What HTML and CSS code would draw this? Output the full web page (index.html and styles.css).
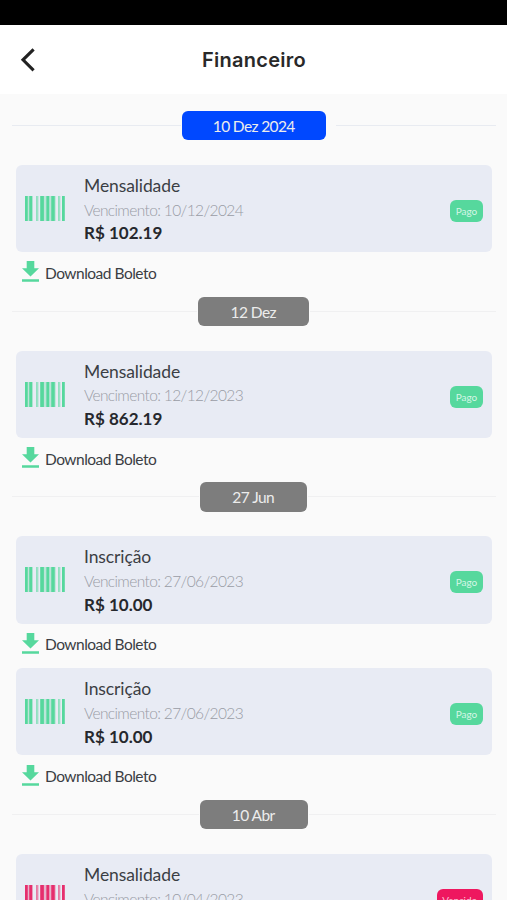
FILE: index.html
```html
<!DOCTYPE html>
<html lang="pt-BR">

<head>
    <meta charset="UTF-8">
    <meta name="viewport" content="width=device-width, initial-scale=1.0">
    <title>Financeiro</title>
    <link rel="stylesheet" href="styles.css">
</head>

<body>
    <!-- ícones usados na lista -->
    <svg width="0" height="0" class="sprite">
        <symbol id="barcode" viewBox="0 0 40 25">
            <path d="M0 0h2.8v25H0zM4.2 0h3.2v25H4.2zM15.2 0h3.7v25h-3.7zM21.3 0h3v25h-3zM26.2 0h3.6v25h-3.6zM37 0h2.8v25H37z"/>
            <path opacity=".6" d="M11 0h1.8v25H11zM33 0h1.8v25H33z"/>
            <path opacity=".3" d="M2.8 0h1.4v25H2.8zM12.8 0h.9v25h-.9zM18.9 0h2.4v25h-2.4zM24.3 0h1.9v25h-1.9zM29.8 0h1v25h-1zM34.8 0h.8v25h-.8z"/>
        </symbol>
        <symbol id="download" viewBox="0 0 17 21">
            <path d="M4.7 0h7.6v7.2H17L8.5 15.4 0 7.2h4.7zM0 18.3h17v2.4H0z"/>
        </symbol>
    </svg>

    <div class="status-bar"></div>
    <header class="header">
        <svg class="back" viewBox="0 0 16 26">
            <path d="M13.6 2.3L3 12.8l10.6 10.5"/>
        </svg>
        <h1>Financeiro</h1>
    </header>

    <main class="list">
        <div class="date current"><span>10 Dez 2024</span></div>
        <div class="card">
            <svg class="barcode"><use href="#barcode"/></svg>
            <div class="info">
                <p class="name">Mensalidade</p>
                <p class="due">Vencimento: 10/12/2024</p>
                <p class="value">R$ 102.19</p>
            </div>
            <span class="badge">Pago</span>
        </div>
        <a class="download"><svg><use href="#download"/></svg>Download Boleto</a>

        <div class="date"><span>12 Dez</span></div>
        <div class="card">
            <svg class="barcode"><use href="#barcode"/></svg>
            <div class="info">
                <p class="name">Mensalidade</p>
                <p class="due">Vencimento: 12/12/2023</p>
                <p class="value">R$ 862.19</p>
            </div>
            <span class="badge">Pago</span>
        </div>
        <a class="download"><svg><use href="#download"/></svg>Download Boleto</a>

        <div class="date"><span>27 Jun</span></div>
        <div class="card">
            <svg class="barcode"><use href="#barcode"/></svg>
            <div class="info">
                <p class="name">Inscrição</p>
                <p class="due">Vencimento: 27/06/2023</p>
                <p class="value">R$ 10.00</p>
            </div>
            <span class="badge">Pago</span>
        </div>
        <a class="download"><svg><use href="#download"/></svg>Download Boleto</a>
        <div class="card">
            <svg class="barcode"><use href="#barcode"/></svg>
            <div class="info">
                <p class="name">Inscrição</p>
                <p class="due">Vencimento: 27/06/2023</p>
                <p class="value">R$ 10.00</p>
            </div>
            <span class="badge">Pago</span>
        </div>
        <a class="download"><svg><use href="#download"/></svg>Download Boleto</a>

        <div class="date"><span>10 Abr</span></div>
        <div class="card late">
            <svg class="barcode"><use href="#barcode"/></svg>
            <div class="info">
                <p class="name">Mensalidade</p>
                <p class="due">Vencimento: 10/04/2023</p>
            </div>
            <span class="badge">Vencido</span>
        </div>
    </main>
</body>
</html>
```
FILE: styles.css
```css
* {
    box-sizing: border-box;
}

body {
    display: flex;
    flex-direction: column;
    height: 100vh;
    margin: 0;
    overflow: hidden;
    background-color: #fafafa;
    color: #3b3e44;
    font-family: Lato, "Liberation Sans", sans-serif;
}

.sprite {
    position: absolute;
}

.status-bar {
    flex: none;
    height: 25px;
    background-color: #000;
}

/* cabeçalho */
.header {
    display: grid;
    grid-template-columns: 40px 1fr 40px;
    align-items: center;
    flex: none;
    height: 69px;
    background-color: #fff;
}

.back {
    width: 16px;
    height: 26px;
    margin-left: 20px;
    fill: none;
    stroke: #222;
    stroke-width: 3.1;
}

h1 {
    margin: 0;
    padding-left: 1px;
    text-align: center;
    font-family: Inter, sans-serif;
    font-size: 20px;
    font-weight: 600;
    letter-spacing: 0.25px;
    color: #292929;
}

/* lista de boletos */
.list {
    flex: 1;
    min-height: 0;
    overflow: hidden;
    padding: 17px 11px 0 11.5px;
}

.date {
    display: flex;
    align-items: center;
    height: 29.3px;
    margin-bottom: 24.6px;
}

.date::before,
.date::after {
    content: "";
    flex: 1;
    height: 1px;
    background-color: #f0f0f1;
}

.date::before {
    margin-right: 1px;
}

.date::after {
    margin-left: 1px;
}

.date span {
    height: 29.3px;
    padding: 0 33px 0 32px;
    border-radius: 6px;
    background-color: #7d7d7d;
    color: #ececec;
    font-size: 15.5px;
    line-height: 31px;
    letter-spacing: -0.55px;
}

.date.current span {
    padding: 0 31px;
    background-color: #0048ff;
    letter-spacing: -0.62px;
}

.date.current::before,
.date.current::after {
    background-color: #e8ebf1;
}

.date.current::after {
    margin-left: 10px;
}

/* compensa a margem da direita para manter a data no centro */
.date.current::before {
    margin-right: 1px;
    flex-basis: 9px;
}

.card {
    display: flex;
    height: 87.4px;
    margin: 0 4px;
    padding: 0 9.5px;
    border-radius: 6px;
    background-color: #e8ebf4;
}

.barcode {
    width: 40px;
    height: 25px;
    margin-top: 31px;
    fill: #56d89d;
}

.info {
    flex: 1;
    margin-left: 19px;
    padding-top: 9.2px;
}

.info p {
    margin: 0;
    height: 23.7px;
    line-height: 24px;
    white-space: nowrap;
}

.name {
    font-size: 17.5px;
    letter-spacing: -0.1px;
}

.due {
    font-size: 15.5px;
    font-weight: 300;
    letter-spacing: -0.62px;
    color: #999ca5;
}

.value {
    font-size: 17px;
    font-weight: 700;
    color: #26282d;
}

.badge {
    height: 22px;
    margin-top: 35px;
    padding: 0 5.5px;
    border-radius: 6px;
    background-color: #56d89d;
    color: #d5f6e6;
    font-size: 10px;
    line-height: 23px;
    letter-spacing: -0.1px;
}

.late .barcode {
    fill: #e62e6d;
}

.late .badge {
    background-color: #ee175f;
    color: #fbc5d7;
}

.download {
    display: flex;
    align-items: center;
    height: 44.4px;
    padding: 0 0 3px 10.5px;
    font-size: 15.5px;
    letter-spacing: -0.5px;
}

.download svg {
    width: 17px;
    height: 21px;
    margin: -2px 6px 0 0;
    fill: #56d89d;
}
```
